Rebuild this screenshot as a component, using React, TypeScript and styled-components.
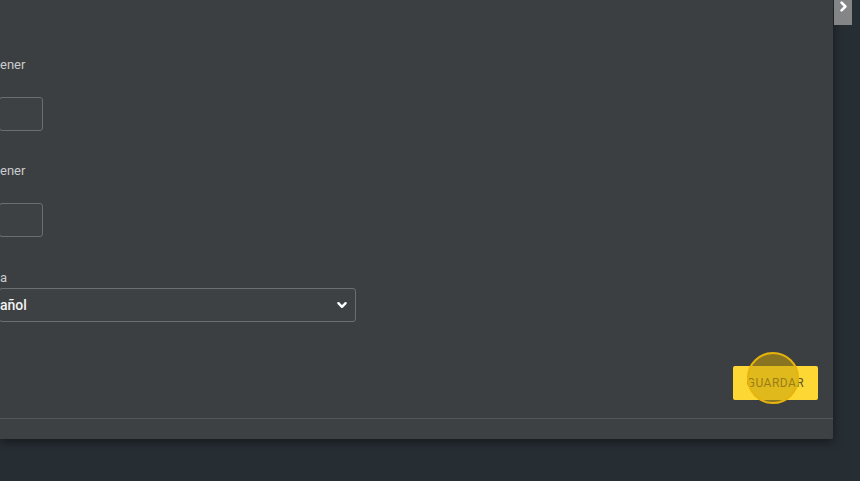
import React from "react";
import styled, { createGlobalStyle } from "styled-components";

const GlobalStyle = createGlobalStyle`
  html, body {
    margin: 0;
    padding: 0;
    background: #262d33;
    font-family: Roboto, "Liberation Sans", Arial, sans-serif;
    overflow: hidden;
  }
`;

const Page = styled.div`
  display: flex;
  align-items: flex-start;
  width: 860px;
  height: 481px;
`;

const Panel = styled.div`
  display: flex;
  flex-direction: column;
  width: 833px;
  height: 439px;
  background: #3c3f41;
  box-shadow: 0 3px 10px rgba(0, 0, 0, 0.45);
  overflow: hidden;
  border-bottom-right-radius: 2px;
`;

const Body = styled.div`
  flex: 1;
  display: flex;
  flex-direction: column;
  padding: 57px 15px 0 0;
`;

const Field = styled.div<{ $gap: number; $after: number }>`
  display: flex;
  flex-direction: column;
  row-gap: ${(p) => p.$gap}px;
  margin-bottom: ${(p) => p.$after}px;
`;

const Label = styled.label`
  font-size: 13px;
  line-height: 16px;
  color: #c9cbcc;
`;

const TextBox = styled.div`
  width: 44px;
  height: 34px;
  margin-left: -1px;
  box-sizing: border-box;
  border: 1px solid #6b6e70;
  border-radius: 3px;
  background: #3e4143;
`;

const Select = styled.div`
  display: flex;
  align-items: center;
  justify-content: space-between;
  width: 357px;
  height: 34px;
  margin-left: -1px;
  box-sizing: border-box;
  padding: 0 7px 0 0;
  border: 1px solid #6b6e70;
  border-radius: 3px;
  background: #3e4143;
  color: #f2f2f2;
  font-size: 14px;
  font-weight: 500;
`;

const Actions = styled.div`
  display: flex;
  justify-content: flex-end;
`;

const SaveButton = styled.button`
  position: relative;
  width: 85px;
  height: 34px;
  border: none;
  border-radius: 2px;
  background: #fdd835;
  color: #5c5226;
  font-family: Roboto, "Liberation Sans", Arial, sans-serif;
  font-size: 12px;
  letter-spacing: 0.5px;
  padding: 0;
`;

const ClickRing = styled.span`
  position: absolute;
  left: 14px;
  top: -14px;
  width: 52px;
  height: 52px;
  box-sizing: border-box;
  border-radius: 50%;
  border: 2px solid #e6b40c;
  background: rgba(200, 160, 10, 0.55);
`;

const Footer = styled.div`
  height: 20px;
  border-top: 1px solid #55585a;
  background: #3e4143;
`;

const Scroll = styled.div`
  margin-left: 1px;
  width: 18px;
  height: 25px;
  display: flex;
  justify-content: center;
  background: #838586;
`;

const Chevron = ({ size, rotate }: { size: number; rotate: number }) => (
  <svg width={size} height={size} viewBox="0 0 10 10" style={{ transform: `rotate(${rotate}deg)` }}>
    <polyline points="2,3.5 5,6.5 8,3.5" fill="none" stroke="#ffffff" strokeWidth="2" strokeLinecap="round" strokeLinejoin="round" />
  </svg>
);

export default function App() {
  return (
    <>
      <GlobalStyle />
      <Page>
        <Panel>
          <Body>
            <Field $gap={24} $after={32}>
              <Label>ener</Label>
              <TextBox />
            </Field>
            <Field $gap={24} $after={33}>
              <Label>ener</Label>
              <TextBox />
            </Field>
            <Field $gap={2} $after={44}>
              <Label>a</Label>
              <Select>
                <span>añol</span>
                <Chevron size={12} rotate={0} />
              </Select>
            </Field>
            <Actions>
              <SaveButton>
                GUARDAR
                <ClickRing />
              </SaveButton>
            </Actions>
          </Body>
          <Footer />
        </Panel>
        <Scroll>
          <Chevron size={13} rotate={-90} />
        </Scroll>
      </Page>
    </>
  );
}
